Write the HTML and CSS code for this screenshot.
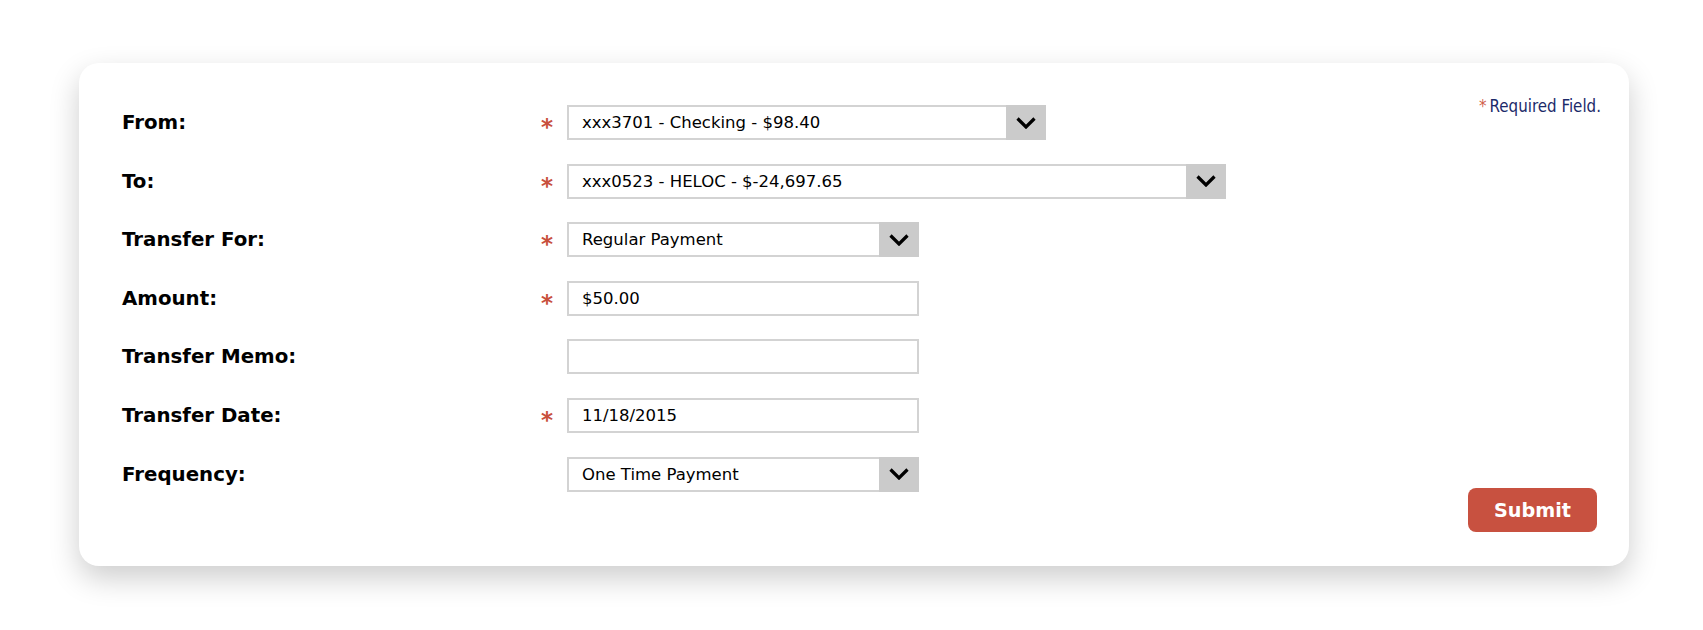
FILE: index.html
```html
<!DOCTYPE html>
<html lang="en">
<head>
<meta charset="utf-8">
<title>Transfer</title>
<link rel="stylesheet" href="styles.css">
</head>
<body>
<div class="page">
<div class="card">
  <div class="form">
    <div class="row">
      <div class="label">From:</div>
      <div class="req">*</div>
      <div class="select w-from"><span class="val">xxx3701 - Checking - $98.40</span><span class="arrow"><svg width="22" height="12" viewBox="0 0 22 12"><polyline points="2.5,1.5 11,10 19.5,1.5" fill="none" stroke="#000" stroke-width="3.2"/></svg></span></div>
    </div>
    <div class="row">
      <div class="label">To:</div>
      <div class="req">*</div>
      <div class="select w-to"><span class="val">xxx0523 - HELOC - $-24,697.65</span><span class="arrow"><svg width="22" height="12" viewBox="0 0 22 12"><polyline points="2.5,1.5 11,10 19.5,1.5" fill="none" stroke="#000" stroke-width="3.2"/></svg></span></div>
    </div>
    <div class="row">
      <div class="label">Transfer For:</div>
      <div class="req">*</div>
      <div class="select w-std"><span class="val">Regular Payment</span><span class="arrow"><svg width="22" height="12" viewBox="0 0 22 12"><polyline points="2.5,1.5 11,10 19.5,1.5" fill="none" stroke="#000" stroke-width="3.2"/></svg></span></div>
    </div>
    <div class="row">
      <div class="label">Amount:</div>
      <div class="req">*</div>
      <div class="input w-std"><span class="val">$50.00</span></div>
    </div>
    <div class="row">
      <div class="label">Transfer Memo:</div>
      <div class="req"></div>
      <div class="input w-std"><span class="val"></span></div>
    </div>
    <div class="row">
      <div class="label">Transfer Date:</div>
      <div class="req">*</div>
      <div class="input w-std"><span class="val">11/18/2015</span></div>
    </div>
    <div class="row">
      <div class="label">Frequency:</div>
      <div class="req"></div>
      <div class="select w-std"><span class="val">One Time Payment</span><span class="arrow"><svg width="22" height="12" viewBox="0 0 22 12"><polyline points="2.5,1.5 11,10 19.5,1.5" fill="none" stroke="#000" stroke-width="3.2"/></svg></span></div>
    </div>
  </div>
  <div class="aside">
    <div class="required"><span class="star">*</span>Required Field.</div>
    <button class="submit">Submit</button>
  </div>
</div>
</div>
</body>
</html>
```
FILE: styles.css
```css
html, body {
  margin: 0;
  padding: 0;
  background: #ffffff;
}
body {
  font-family: "DejaVu Sans", Verdana, sans-serif;
  color: #111;
}
.page {
  padding: 63px 74px 64px 79px;
}
.card {
  box-sizing: border-box;
  height: 503px;
  background: #fff;
  border-radius: 20px;
  box-shadow: 0 12px 30px rgba(0, 0, 0, 0.2);
  padding: 33px 28px 34px 43px;
  display: flex;
  justify-content: space-between;
}
.form {
  margin-top: 9px;
  display: flex;
  flex-direction: column;
  gap: 23.6px;
}
.row {
  display: grid;
  grid-template-columns: 420px 25px auto;
  height: 35px;
}
.label {
  font-weight: bold;
  font-size: 19.8px;
  line-height: 35px;
  color: #000;
}
.req {
  color: #c8503c;
  font-size: 23px;
  font-weight: bold;
  line-height: 1;
  padding-top: 11px;
  margin-left: -1px;
}
.select, .input {
  box-sizing: border-box;
  height: 35px;
  display: flex;
  background: #fff;
}
.val {
  flex: 1;
  box-sizing: border-box;
  height: 35px;
  border: 2px solid #d3d3d3;
  padding-left: 13px;
  font-size: 16.5px;
  line-height: 31px;
  color: #000;
  white-space: nowrap;
}
.select .val {
  border-right: none;
}
.arrow {
  width: 40px;
  height: 35px;
  background: #cbcbcb;
  display: flex;
  align-items: center;
  justify-content: center;
}
.arrow svg {
  display: block;
}
.w-from { width: 479px; }
.w-to { width: 659px; }
.w-std { width: 352px; }
.aside {
  display: flex;
  flex-direction: column;
  justify-content: space-between;
  align-items: flex-end;
}
.required {
  font-family: "DejaVu Sans Condensed", "DejaVu Sans", sans-serif;
  font-stretch: condensed;
  font-size: 16.8px;
  line-height: 20px;
  color: #1c2a6a;
}
.required .star {
  color: #d0604c;
  margin-right: 3px;
}
.submit {
  width: 129px;
  height: 44px;
  margin-right: 4px;
  border: none;
  border-radius: 8px;
  background: #c85140;
  color: #fff;
  font-family: "DejaVu Sans", Verdana, sans-serif;
  font-weight: bold;
  font-size: 19.2px;
  padding: 0;
  cursor: pointer;
}
```
